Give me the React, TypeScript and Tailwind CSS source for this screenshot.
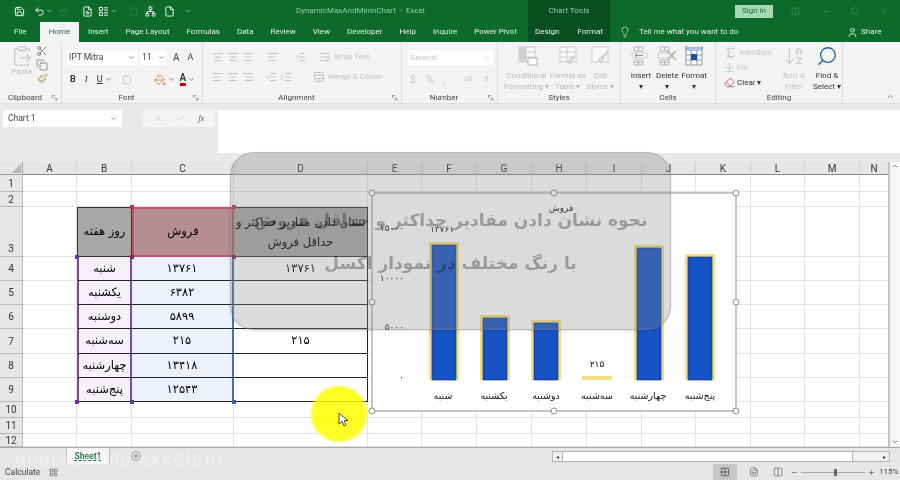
import {
  Save,
  Undo2,
  Redo2,
  FileSearch,
  LayoutList,
  Network,
  File,
  Scissors,
  Copy,
  Paintbrush,
  ClipboardPaste,
  ChevronDown,
  ChevronUp,
  Lightbulb,
  User,
  Minus,
  X,
  Check,
  Square,
  Grid2x2,
  PaintBucket,
  Search,
  Eraser,
  Sigma,
  ArrowDownToLine,
  ArrowDownAZ,
  AlignLeft,
  AlignCenter,
  AlignRight,
  IndentIncrease,
  IndentDecrease,
  WrapText,
  TableCellsMerge,
  Plus,
  LayoutGrid,
  Columns2,
  FileText,
} from "lucide-react";

const ui = "font-['Roboto','Liberation_Sans',sans-serif]";
const fa = "font-['DejaVu_Sans','Noto_Sans',sans-serif]";

const tabs = ["Insert", "Page Layout", "Formulas", "Data", "Review", "View", "Developer", "Help", "Inquire", "Power Pivot"];

const columns = ["A", "B", "C", "D", "E", "F", "G", "H", "I", "J", "K", "L", "M", "N"];

const rowNumbers = [1, 2, 3, 4, 5, 6, 7, 8, 9, 10, 11, 12];

const sheetData: Record<number, string[]> = {
  4: ["شنبه", "۱۳۷۶۱", "۱۳۷۶۱"],
  5: ["یکشنبه", "۶۳۸۲", ""],
  6: ["دوشنبه", "۵۸۹۹", ""],
  7: ["سه‌شنبه", "۲۱۵", "۲۱۵"],
  8: ["چهارشنبه", "۱۳۴۱۸", ""],
  9: ["پنج‌شنبه", "۱۲۵۴۳", ""],
};

const bars = [
  { x: 429, top: 242 },
  { x: 480, top: 315 },
  { x: 531, top: 320 },
  { x: 582, top: 376 },
  { x: 634, top: 245 },
  { x: 685, top: 254 },
];

const categories = [
  { x: 443, label: "شنبه" },
  { x: 494, label: "یکشنبه" },
  { x: 546, label: "دوشنبه" },
  { x: 597, label: "سه‌شنبه" },
  { x: 648, label: "چهارشنبه" },
  { x: 700, label: "پنج‌شنبه" },
];

const axisLabels = [
  { y: 231, label: "۱۵۰۰۰" },
  { y: 281, label: "۱۰۰۰۰" },
  { y: 330, label: "۵۰۰۰" },
  { y: 380, label: "۰" },
];

const chartHandles = [
  [372, 193],
  [554, 193],
  [736, 193],
  [372, 302],
  [736, 302],
  [372, 411],
  [554, 411],
  [736, 411],
];

function CellsIcon({ kind }: { kind: "insert" | "delete" | "format" }) {
  return (
    <svg width="24" height="22" viewBox="0 0 24 22" fill="none" stroke={kind === "format" ? "#6b7f96" : "#a8a8a8"} strokeWidth="0.8">
      {kind === "format" ? (
        <>
          <path d="M4 3h16M4 1v4M20 1v4" stroke="#1f6fb5" />
          <rect x="4" y="5" width="16" height="15" fill="#fff" />
          <path d="M9 5v15M15 5v15M4 10h16M4 15h16" />
          <rect x="9" y="9" width="6" height="6" fill="#1d4f94" stroke="none" />
        </>
      ) : (
        <>
          <path d="M5 2h9v4H5zM5 15h9v5H5zM9.5 2v4M9.5 15v5M5 17.5h9" />
          <path d="M3 8h15v5H3z" stroke="#c4c4c4" />
          {kind === "insert" ? (
            <path d="M6 10.5h8M8 9l-2 1.5 2 1.5" stroke="#777" />
          ) : (
            <path d="M12 6l9 9M21 6l-9 9" stroke="#b0b0b0" strokeWidth="1.4" />
          )}
        </>
      )}
    </svg>
  );
}

function StyleIcon({ variant }: { variant: "conditional" | "table" | "cell" }) {
  return (
    <svg width="24" height="22" viewBox="0 0 24 22" fill="none" stroke="#c9c9c9" strokeWidth="0.9">
      <rect x="4" y="2" width="16" height="15" fill="#f8f8f8" />
      {variant === "conditional" && <rect x="4" y="2" width="7" height="15" fill="#d0d0d0" stroke="none" />}
      {variant !== "cell" && <path d="M4 7h16M4 12h16M11 2v15" />}
      {variant === "table" && <path d="M20 10l-6 9-3-3z" fill="#d8d8d8" />}
      {variant === "cell" && <path d="M20 6l-7 12-3-3z" fill="#d8d8d8" />}
      {variant === "conditional" && <rect x="13" y="13" width="9" height="7" fill="#fff" stroke="#aaa" />}
    </svg>
  );
}

function Group({ className, label, launcher, children }: { className: string; label: string; launcher?: boolean; children: React.ReactNode }) {
  return (
    <div className={`flex h-full shrink-0 flex-col border-r border-[#dcdcdc] ${className}`}>
      <div className="flex min-h-0 flex-1">{children}</div>
      <div className={`relative h-[11px] text-center text-[8px] leading-[11px] text-[#444] ${launcher ? "pr-[11px]" : ""}`}>
        {label}
        {launcher && (
          <svg className="absolute bottom-[2px] right-[3px]" width="6" height="6" viewBox="0 0 6 6" fill="none" stroke="#8a8a8a" strokeWidth="0.8">
            <path d="M.5 3V.5H3M2 2l3 3M5 3v2H3" />
          </svg>
        )}
      </div>
    </div>
  );
}

function BigButton({ icon, lines, muted }: { icon: React.ReactNode; lines: string[]; muted?: boolean }) {
  return (
    <div className={`flex flex-col items-center text-center text-[8px] leading-[11px] ${muted ? "text-[#bcbcbc]" : "text-[#333]"}`}>
      <div className="mb-[3px] flex h-[22px] items-center">{icon}</div>
      {lines.map((l) => (
        <span key={l} className="whitespace-nowrap">
          {l}
        </span>
      ))}
    </div>
  );
}

function Ribbon() {
  const gray = "text-[#c4c4c4]";
  return (
    <div className={`flex h-[61px] shrink-0 bg-[#f3f3f3] ${ui}`}>
      <Group className="w-[62px]" label="Clipboard" launcher>
        <div className="flex w-full pl-[10px] pt-[3px]">
          <div className="flex w-[24px] flex-col items-center text-[8px] leading-[10px] text-[#bbb]">
            <ClipboardPaste size={22} strokeWidth={1.4} className="text-[#c8c8c8]" />
            Paste
          </div>
          <div className="ml-[2px] flex flex-col items-center gap-[2px] text-[#555]">
            <Scissors size={12} strokeWidth={1.3} />
            <Copy size={12} strokeWidth={1.2} />
            <Paintbrush size={11} strokeWidth={1.6} className="text-[#a58a3a]" />
          </div>
        </div>
      </Group>

      <Group className="w-[141px]" label="Font" launcher>
        <div className="flex w-full flex-col gap-[8px] pl-[5px] pt-[8px]">
          <div className="flex items-center text-[8.5px] text-[#444]">
            <div className="flex h-[15px] w-[70px] items-center justify-between bg-white px-[2px]">
              IPT Mitra <ChevronDown size={7} />
            </div>
            <div className="ml-[3px] flex h-[15px] w-[27px] items-center justify-between bg-white px-[2px]">
              11 <ChevronDown size={7} />
            </div>
            <span className="ml-[6px] text-[10px]">A</span>
            <span className="ml-[8px] text-[9px]">A</span>
          </div>
          <div className="flex items-center pl-[3px] text-[9px] text-[#333]">
            <b>B</b>
            <i className="ml-[9px] font-serif">I</i>
            <u className="ml-[9px]">U</u>
            <ChevronDown size={7} className="ml-[2px]" />
            <Square size={10} className={`ml-[10px] ${gray}`} />
            <PaintBucket size={12} className="ml-[22px] text-[#c5650f]" strokeWidth={1.4} />
            <ChevronDown size={7} className="ml-[2px]" />
            <span className="ml-[5px] border-b-[3px] border-[#c00000] text-[10px] font-semibold leading-[10px]">A</span>
            <ChevronDown size={7} className="ml-[2px]" />
          </div>
        </div>
      </Group>

      <Group className="w-[199px]" label="Alignment" launcher>
        <div className={`flex w-full flex-col gap-[8px] pl-[9px] pt-[9px] text-[8px] ${gray}`}>
          <div className="flex items-center gap-[3px]">
            <AlignCenter size={12} />
            <AlignCenter size={12} />
            <AlignCenter size={12} />
            <AlignLeft size={12} className="ml-[10px]" />
            <IndentIncrease size={12} className="ml-[12px]" />
            <WrapText size={12} className="ml-[10px]" />
            <span className="whitespace-nowrap">Wrap Text</span>
          </div>
          <div className="flex items-center gap-[3px]">
            <AlignLeft size={12} />
            <AlignCenter size={12} />
            <AlignRight size={12} />
            <IndentDecrease size={12} className="ml-[8px]" />
            <IndentIncrease size={12} />
            <TableCellsMerge size={12} className="ml-[18px]" />
            <span className="whitespace-nowrap">Merge &amp; Center</span>
          </div>
        </div>
      </Group>

      <Group className="w-[96px]" label="Number" launcher>
        <div className={`flex w-full flex-col gap-[7px] pl-[6px] pt-[8px] text-[8px] ${gray}`}>
          <div className="flex h-[15px] w-[85px] items-center justify-between bg-white px-[2px]">
            General <ChevronDown size={7} />
          </div>
          <div className="flex items-center gap-[10px] pl-[2px] text-[10px]">
            <span>$</span>
            <span>%</span>
            <span>,</span>
            <span className="ml-[8px] text-[7px]">.00</span>
            <span className="text-[7px]">.0</span>
          </div>
        </div>
      </Group>

      <Group className="w-[123px]" label="Styles">
        <div className="flex w-full justify-between px-[6px] pt-[3px]">
          <BigButton muted icon={<StyleIcon variant="conditional" />} lines={["Conditional", "Formatting ▾"]} />
          <BigButton muted icon={<StyleIcon variant="table" />} lines={["Format as", "Table ▾"]} />
          <BigButton muted icon={<StyleIcon variant="cell" />} lines={["Cell", "Styles ▾"]} />
        </div>
      </Group>

      <Group className="w-[95px]" label="Cells">
        <div className="flex w-full justify-between px-[8px] pt-[3px]">
          <BigButton icon={<CellsIcon kind="insert" />} lines={["Insert", "▾"]} />
          <BigButton icon={<CellsIcon kind="delete" />} lines={["Delete", "▾"]} />
          <BigButton icon={<CellsIcon kind="format" />} lines={["Format", "▾"]} />
        </div>
      </Group>

      <Group className="w-[127px]" label="Editing">
        <div className="flex w-full pl-[8px] pt-[3px] text-[8px] leading-[15px]">
          <div className="flex w-[59px] flex-col">
            <div className={`flex items-center gap-[2px] ${gray}`}>
              <Sigma size={13} /> AutoSum
            </div>
            <div className={`flex items-center gap-[2px] ${gray}`}>
              <ArrowDownToLine size={11} /> Fill
            </div>
            <div className="flex items-center gap-[2px] text-[#333]">
              <Eraser size={11} className="text-[#d0507a]" /> Clear ▾
            </div>
          </div>
          <div className="flex flex-col items-center leading-[11px] text-[#c4c4c4]">
            <ArrowDownAZ size={22} strokeWidth={1.1} className="mb-[3px]" />
            <span className="whitespace-nowrap">Sort &amp;</span>
            <span>Filter</span>
          </div>
          <div className="ml-[8px] flex flex-col items-center leading-[11px] text-[#333]">
            <Search size={22} strokeWidth={1.4} className="mb-[3px] -scale-x-100 text-[#1b5fa8]" />
            <span className="whitespace-nowrap">Find &amp;</span>
            <span className="whitespace-nowrap">Select ▾</span>
          </div>
        </div>
      </Group>

      <div className="flex flex-1 items-end justify-end pb-[2px] pr-[5px]">
        <ChevronUp size={9} className="text-[#666]" />
      </div>
    </div>
  );
}

function tableCellClass(row: number, col: string) {
  if (col === "B") {
    if (row === 3) return "bg-[#a8a6a6] border border-[#333]";
    return "bg-[#f6f0fb] border-l-2 border-r-2 border-b border-l-[#7a4aa8] border-r-[#7a4aa8] border-b-[#222]";
  }
  if (col === "C") {
    if (row === 3) return "bg-[#b58e94] border-2 border-[#c8506a]";
    return "bg-[#edf1fb] border-r-2 border-b border-r-[#4a6fb8] border-b-[#222]";
  }
  if (row === 3) return "bg-[#a8a6a6] border-b border-r border-t border-[#333]";
  return "bg-white border-b border-r border-[#222]";
}

function Sheet() {
  return (
    <div className="relative min-h-0 flex-1 overflow-hidden bg-[#e6e6e6]">
      <div className="grid w-[889px] grid-cols-[23px_54px_55px_102px_134px_54px_55px_55px_55px_55px_54px_55px_54px_55px_29px] grid-rows-[13px_17px_15px_50px_24px_24px_24px_25px_24px_24px_16px_16px_13px] bg-white">
        <div className="flex items-end justify-end border-b border-r border-[#a0a0a0] bg-[#e6e6e6] p-[1px]">
          <div className="h-0 w-0 border-b-[9px] border-l-[9px] border-b-[#b4b4b4] border-l-transparent" />
        </div>
        {columns.map((c) => (
          <div key={c} className={`flex items-center justify-center border-b border-r border-b-[#8a8a8a] border-r-[#cfcfcf] bg-[#e6e6e6] text-[10px] text-[#333] ${ui}`}>
            {c}
          </div>
        ))}
        {rowNumbers.map((r) => (
          <Row key={r} row={r} />
        ))}
      </div>

      {/* range handles */}
      <span className="absolute left-[130px] top-[43px] h-[4px] w-[4px] bg-[#c0304f]" />
      <span className="absolute left-[232px] top-[43px] h-[4px] w-[4px] bg-[#c0304f]" />
      <span className="absolute left-[130px] top-[93px] h-[4px] w-[4px] bg-[#7a2a5a]" />
      <span className="absolute left-[232px] top-[93px] h-[4px] w-[4px] bg-[#7a2a5a]" />
      <span className="absolute left-[75px] top-[93px] h-[4px] w-[4px] bg-[#5a3aa0]" />
      <span className="absolute left-[75px] top-[238px] h-[4px] w-[4px] bg-[#7030a0]" />
      <span className="absolute left-[130px] top-[238px] h-[4px] w-[4px] bg-[#5a3aa0]" />
      <span className="absolute left-[232px] top-[238px] h-[4px] w-[4px] bg-[#3a5fae]" />

      {/* vertical scrollbar */}
      <div className="absolute bottom-0 right-0 top-0 flex w-[12px] flex-col items-center justify-between border-l-2 border-[#c4c4c4] bg-[#f7f7f7] pb-[1px] text-[#555]">
        <ChevronUp size={8} />
        <ChevronDown size={8} />
      </div>
    </div>
  );
}

function Row({ row }: { row: number }) {
  const data = sheetData[row];
  return (
    <>
      <div className={`flex justify-center border-b border-r border-[#b8b8b8] bg-[#e6e6e6] text-[10px] text-[#333] ${ui} ${row === 3 ? "items-end" : "items-center"}`}>
        {row}
      </div>
      {columns.map((c) => {
        const inTable = row >= 3 && row <= 9 && (c === "B" || c === "C" || c === "D");
        if (!inTable) {
          return <div key={c} className="border-b border-r border-[#e3e3e3]" />;
        }
        let content: React.ReactNode = null;
        if (row === 3) {
          if (c === "B") content = "روز هفته";
          if (c === "C") content = "فروش";
          if (c === "D")
            content = (
              <span className="leading-[20px]">
                نشان دادن مقادیر حداکثر و
                <br />
                حداقل فروش
              </span>
            );
        } else {
          content = data[c === "B" ? 0 : c === "C" ? 1 : 2];
        }
        return (
          <div dir="rtl" key={c} className={`flex items-center justify-center text-center text-[11.5px] text-black ${fa} ${tableCellClass(row, c)}`}>
            {content}
          </div>
        );
      })}
    </>
  );
}

function Chart() {
  return (
    <svg className={`absolute left-[366px] top-[187px] ${fa}`} width="377" height="230" viewBox="366 187 377 230">
      <rect x="372" y="193" width="364" height="218" fill="#ffffff" stroke="#b4b4b4" strokeWidth="1.5" />
      <text x="561" y="211" textAnchor="middle" fontSize="9" fill="#111">
        فروش
      </text>
      {axisLabels.map((a) => (
        <text key={a.y} x="404" y={a.y} textAnchor="end" fontSize="9" fill="#111">
          {a.label}
        </text>
      ))}
      {bars.map((b) => (
        <g key={b.x}>
          <rect x={b.x} y={b.top} width="30" height={380 - b.top} fill="#f3df82" />
          {380 - b.top > 10 && <rect x={b.x + 3} y={b.top + 3} width="24" height={377 - b.top} fill="#1552c4" stroke="#15357a" strokeWidth="0.7" />}
        </g>
      ))}
      <text x="442" y="232" textAnchor="middle" fontSize="9" fill="#111">
        ۱۳۷۶۱
      </text>
      <text x="597" y="367" textAnchor="middle" fontSize="9" fill="#111">
        ۲۱۵
      </text>
      {categories.map((c) => (
        <text key={c.x} x={c.x} y="399" textAnchor="middle" fontSize="9.5" fill="#111">
          {c.label}
        </text>
      ))}
      {chartHandles.map(([x, y]) => (
        <circle key={`${x}-${y}`} cx={x} cy={y} r="3" fill="#ffffff" stroke="#8c8c8c" />
      ))}
    </svg>
  );
}

export default function App() {
  return (
    <div className={`relative flex h-[480px] w-[900px] flex-col overflow-hidden bg-white blur-[0.4px] ${ui}`}>
      {/* title bar */}
      <div className="flex h-[22px] shrink-0 items-center bg-[#0b6a2c] text-white">
        <div className="flex w-[296px] items-center pl-[14px]">
          <Save size={11} />
          <Undo2 size={11} className="ml-[9px]" />
          <ChevronDown size={6} className="ml-[1px]" />
          <Redo2 size={11} className="ml-[6px] text-[#2f8a4c]" />
          <FileSearch size={11} className="ml-[13px]" />
          <LayoutList size={11} className="ml-[5px]" />
          <ChevronDown size={6} className="ml-[2px]" />
          <Square size={9} className="ml-[12px] text-[#2f8a4c]" />
          <Network size={11} className="ml-[7px]" />
          <File size={11} className="ml-[8px]" />
          <ChevronDown size={6} className="ml-[10px]" />
        </div>
        <div className="w-[232px] whitespace-nowrap text-[8px] text-[#93cda5]">DynamicMaxAndMinInChart&nbsp; -&nbsp; Excel</div>
        <div className="flex h-full w-[82px] items-center justify-center bg-[#094f20] text-[8px] text-[#93cda5]">Chart Tools</div>
        <div className="ml-[125px] flex h-[13px] w-[38px] items-center justify-center bg-[#a3d9b1] text-[8px] text-[#1c6f38]">Sign in</div>
        <Columns2 size={9} className="ml-[18px] text-[#3c9459]" />
        <Minus size={9} className="ml-[21px] text-[#3c9459]" />
        <Square size={8} className="ml-[21px] text-[#3c9459]" />
        <X size={9} className="ml-[21px] text-[#3c9459]" />
      </div>

      {/* tabs */}
      <div className="flex h-[20px] shrink-0 items-center bg-[#0b6a2c] text-[8px] text-[#e4f2e8]">
        <span className="ml-[14px] w-[26px]">File</span>
        <div className="flex h-full w-[39px] items-center justify-center bg-[#f3f3f3] text-[#1c6f38]">Home</div>
        <div className="ml-[9px] flex w-[440px] items-center gap-[17px]">
          {tabs.map((t) => (
            <span key={t} className="whitespace-nowrap">
              {t}
            </span>
          ))}
        </div>
        <div className="flex h-full w-[82px] items-center justify-center gap-[18px] bg-[#094f20]">
          <span>Design</span>
          <span>Format</span>
        </div>
        <Lightbulb size={12} className="ml-[9px]" strokeWidth={1.4} />
        <span className="ml-[8px] w-[208px] whitespace-nowrap">Tell me what you want to do</span>
        <User size={11} />
        <span className="ml-[3px]">Share</span>
      </div>

      <Ribbon />

      {/* formula bar */}
      <div className="flex h-[59px] shrink-0 items-start border-t border-[#dedede] bg-[#e9e9e9] pt-[6px]">
        <div className="ml-[3px] flex h-[17px] w-[119px] items-center justify-between bg-white px-[5px] text-[8.5px] text-[#444]">
          Chart 1 <ChevronDown size={7} />
        </div>
        <div className="ml-[21px] flex h-[17px] w-[72px] items-center justify-around bg-[#f4f4f4] px-[4px] text-[#c0c0c0]">
          <X size={9} />
          <Check size={9} />
          <span className="font-serif text-[8px] italic text-[#666]">fx</span>
        </div>
        <div className="ml-[3px] h-[43px] flex-1 bg-white" />
      </div>

      <Sheet />

      {/* sheet tabs */}
      <div className="flex h-[17px] shrink-0 items-center border-t border-[#a8a8a8] bg-[#e6e6e6]">
        <div className="ml-[66px] flex h-full w-[44px] items-center justify-center border-x border-[#bbb] bg-[#f5f5f5] text-[8.5px] font-semibold text-[#1c7a3e] underline decoration-dashed">
          Sheet1
        </div>
        <Plus size={10} className="ml-[21px] rounded-full border border-[#999] text-[#666]" />
        <div className="ml-[411px] flex h-[11px] w-[338px] items-center justify-between border border-[#b5b5b5] bg-[#f0f0f0] text-[#444]">
          <span className="px-[3px] text-[6px]">◂</span>
          <div className="h-full flex-1 border-x border-[#b5b5b5] bg-white" />
          <div className="h-full w-[27px]" />
          <span className="px-[3px] text-[6px]">▸</span>
        </div>
      </div>

      {/* status bar */}
      <div className="flex h-[16px] shrink-0 items-center bg-[#e6e6e6] text-[8.5px] text-[#444]">
        <span className="ml-[5px] w-[44px]">Calculate</span>
        <LayoutGrid size={9} className="text-[#666]" />
        <div className="ml-[655px] flex h-full w-[24px] items-center justify-center bg-[#c6c6c6]">
          <Grid2x2 size={10} className="text-[#555]" />
        </div>
        <FileText size={10} className="ml-[12px] text-[#777]" />
        <Columns2 size={10} className="ml-[14px] text-[#777]" />
        <Minus size={7} className="ml-[8px]" />
        <div className="relative ml-[3px] h-[1px] w-[64px] bg-[#aaa]">
          <span className="absolute left-[33px] top-[-3px] h-[7px] w-[3px] bg-[#666]" />
        </div>
        <Plus size={7} className="ml-[3px]" />
        <span className="ml-[4px] text-[8px]">115%</span>
      </div>

      <Chart />

      {/* tutorial caption over the sheet */}
      <div dir="rtl" className={`absolute left-[230px] top-[152px] flex h-[178px] w-[441px] flex-col items-center rounded-[24px] border border-[#8f8080]/40 bg-[#888888]/30 pt-[46px] text-[17px] font-bold leading-[43px] text-black/30 shadow-sm ${fa}`}>
        <span className="whitespace-nowrap">نحوه نشان دادن مقادیر حداکثر و حداقل فروش</span>
        <span className="whitespace-nowrap">با رنگ مختلف در نمودار اکسل</span>
      </div>

      {/* pointer highlight */}
      <div className="absolute left-[311px] top-[386px] h-[56px] w-[56px] rounded-full bg-[#ffff00]/85 blur-[1px]" />
      <svg className="absolute left-[338px] top-[412px]" width="11" height="15" viewBox="0 0 11 15">
        <path d="M1 1v11l3-2.6 2 4.4 2-.9-2-4.3h4z" fill="#ffffff" stroke="#333333" strokeWidth="0.9" />
      </svg>

      {/* channel watermark */}
      <div className="absolute left-[15px] top-[445px] whitespace-nowrap font-['Liberation_Sans',sans-serif] text-[19px] font-bold tracking-[1px] text-white/30">
        aparat.com/ exceluni
      </div>
    </div>
  );
}
